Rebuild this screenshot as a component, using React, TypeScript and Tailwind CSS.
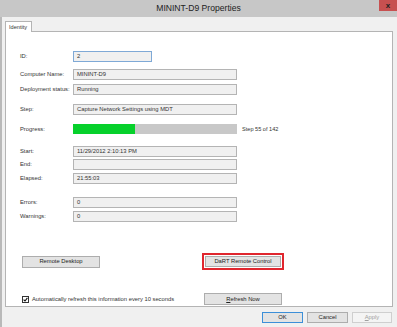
const Field = ({ label, value, focus }: { label: string; value?: string; focus?: boolean }) => (
  <div className="flex items-center h-[11px]">
    <div className="w-[53px] shrink-0 whitespace-nowrap">{label}</div>
    <div
      className={`h-[11px] flex items-center pl-[3px] border bg-[#f0f0f0] ${
        focus ? "w-[79px] border-[#7fa9d6]" : "w-[164px] border-[#b4b4b4]"
      }`}
    >
      {value}
    </div>
  </div>
);

const Button = ({ children, className = "" }: { children: React.ReactNode; className?: string }) => (
  <div
    className={`flex items-center justify-center bg-[#e3e3e3] border border-[#adadad] text-[#222] ${className}`}
  >
    {children}
  </div>
);

const App = () => {
  return (
    <div
      className="w-[397px] h-[327px] bg-[#f0f0f0] flex flex-col text-[5.8px] text-[#333] overflow-hidden"
      style={{ fontFamily: '"Liberation Sans", Arial, sans-serif' }}
    >
      {/* title bar */}
      <div className="relative h-[17px] shrink-0 bg-[#c7c7c7] flex items-center justify-center">
        <span className="text-[8.6px] text-[#222]">MININT-D9 Properties</span>
        <div className="absolute right-0 top-0 w-[18px] h-[11px] bg-[#c75050] flex items-center justify-center text-[8px] font-bold text-[#222] leading-none">
          x
        </div>
      </div>

      <div className="flex-1 flex flex-col border-l-[2px] border-[#b9b9b9]">
        {/* tab strip */}
        <div className="flex h-[14px] items-end pl-[3px]">
          <div className="h-[11px] w-[27px] bg-white border border-b-0 border-[#b4b4b4] pl-[3px] flex items-center text-[5.6px] relative top-[1px]">
            Identity
          </div>
        </div>

        {/* panel */}
        <div className="ml-[3px] mr-[4px] h-[276px] border border-[#b4b4b4] bg-white pl-[14px] flex flex-col">
          <div className="mt-[19px]">
            <Field label="ID:" value="2" focus />
          </div>
          <div className="mt-[7px]">
            <Field label="Computer Name:" value="MININT-D9" />
          </div>
          <div className="mt-[4px]">
            <Field label="Deployment status:" value="Running" />
          </div>
          <div className="mt-[9px]">
            <Field label="Step:" value="Capture Network Settings using MDT" />
          </div>
          <div className="mt-[9px] flex items-center h-[10px]">
            <div className="w-[53px] shrink-0">Progress:</div>
            <div className="w-[164px] h-[10px] bg-[#c8c8c8] flex">
              <div className="w-[62px] h-full bg-[#06d12b]" />
            </div>
            <div className="ml-[5px] text-[5.6px]">Step 55 of 142</div>
          </div>
          <div className="mt-[12px]">
            <Field label="Start:" value="11/29/2012 2:10:13 PM" />
          </div>
          <div className="mt-[2px]">
            <Field label="End:" />
          </div>
          <div className="mt-[3px]">
            <Field label="Elapsed:" value="21:55:03" />
          </div>
          <div className="mt-[13px]">
            <Field label="Errors:" value="0" />
          </div>
          <div className="mt-[3px]">
            <Field label="Warnings:" value="0" />
          </div>

          <div className="mt-[31px] flex items-center">
            <Button className="w-[78px] h-[12px] ml-[2px]">Remote Desktop</Button>
            <div className="ml-[102px] border-2 border-[#e0262e] p-[1px]">
              <Button className="w-[76px] h-[11px]">DaRT Remote Control</Button>
            </div>
          </div>

          <div className="mt-[23px] flex items-center h-[12px]">
            <div className="w-[182px] ml-[2px] flex items-center">
              <div className="w-[7px] h-[7px] border border-[#333] bg-white flex items-center justify-center">
                <svg width="5" height="5" viewBox="0 0 5 5">
                  <path d="M0.6 2.6 L2 4 L4.4 0.8" stroke="#111" strokeWidth="1.1" fill="none" />
                </svg>
              </div>
              <span className="ml-[3px] whitespace-nowrap">Automatically refresh this information every 10 seconds</span>
            </div>
            <Button className="w-[78px] h-[12px]">
              <span>
                <span className="underline">R</span>efresh Now
              </span>
            </Button>
          </div>
        </div>

        {/* bottom buttons */}
        <div className="flex justify-end gap-[4px] mr-[5px] mt-[5px]">
          <Button className="w-[41px] h-[11px] !border-[#3c8fd8]">OK</Button>
          <Button className="w-[41px] h-[11px]">Cancel</Button>
          <div className="w-[40px] h-[11px] flex items-center justify-center border border-[#cfcfcf] bg-[#f4f4f4] text-[#a0a0a0]">
            <span>
              <span className="underline">A</span>pply
            </span>
          </div>
        </div>
      </div>
    </div>
  );
};

export default App;
